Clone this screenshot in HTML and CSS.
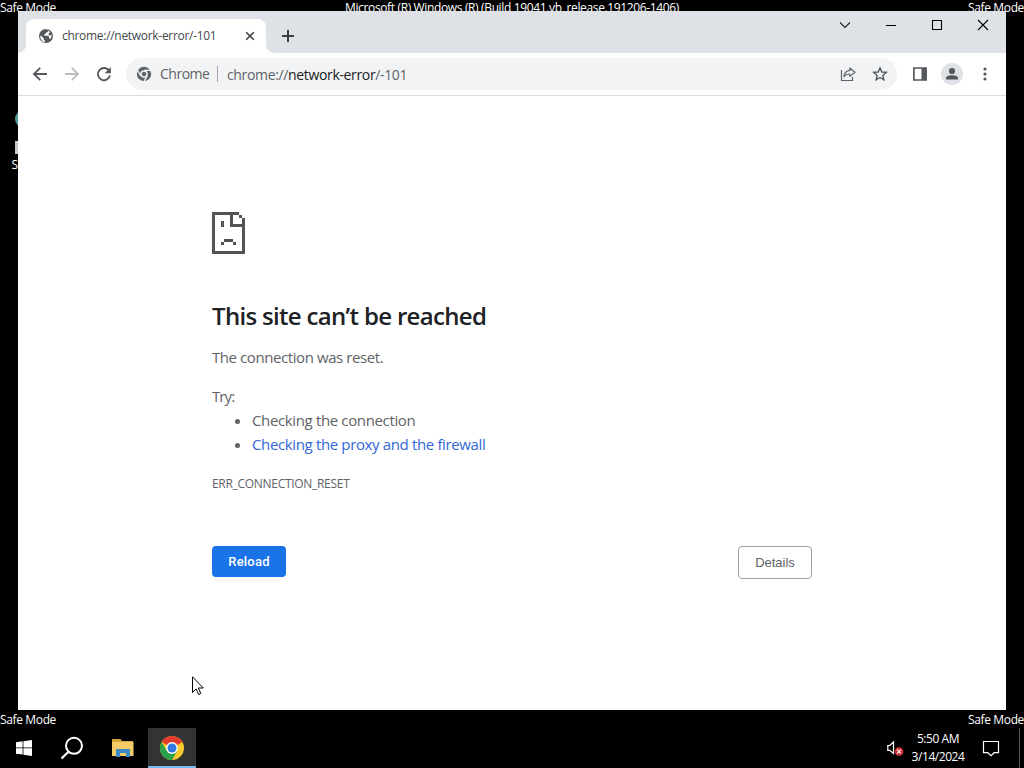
FILE: index.html
```html
<!DOCTYPE html>
<html lang="en">
  <head>
    <meta charset="UTF-8" />
    <meta name="viewport" content="width=device-width, initial-scale=1.0" />
    <title>chrome://network-error/-101</title>
    <link rel="stylesheet" href="styles.css">
  </head>
  <body>
    <div class="desktop">
      <div class="safe-row top">
        <span>Safe Mode</span>
        <span class="build">Microsoft (R) Windows (R) (Build 19041.vb_release.191206-1406)</span>
        <span>Safe Mode</span>
      </div>
      <div class="shortcut">
        <i class="disc"></i>
        <i class="bar"></i>
        <span>S</span>
      </div>
      <div class="safe-row bottom">
        <span>Safe Mode</span>
        <span>Safe Mode</span>
      </div>
    </div>

    <div class="window">
      <div class="tabstrip">
        <div class="tab">
          <svg class="globe" width="16" height="16" viewBox="0 0 16 16">
            <circle cx="8" cy="8" r="7" fill="#54585c" />
            <path d="M2.4 7.2l3.2 3.1v1.2l1.3 1.3v1.5A6.2 6.2 0 0 1 2.4 7.2zM7.2 1.8h3.2v1.4L9.2 4.5H7.8v1.6H6.4v1.6h3.8l1 1.1v1.9h1.2A5.7 5.7 0 0 0 13.7 8c0-.5-.1-1-.2-1.4l-1.4 1.1-1.9-1.5 1.9-2.3A6 6 0 0 0 7.2 1.8z" fill="#fff" />
          </svg>
          <span class="tab-title">chrome://network-error/-101</span>
          <svg class="tab-close" width="10" height="10" viewBox="0 0 10 10">
            <path d="M1.2 1.2l7.6 7.6M8.8 1.2L1.2 8.8" stroke="#3c4043" stroke-width="1.6" />
          </svg>
        </div>
        <svg class="new-tab" width="14" height="14" viewBox="0 0 14 14">
          <path d="M7 1v12M1 7h12" stroke="#3c4043" stroke-width="2" />
        </svg>
        <div class="controls">
          <svg width="12" height="12" viewBox="0 0 12 12"><path d="M1 3.5l5 5 5-5" fill="none" stroke="#222" stroke-width="1.1" /></svg>
          <svg width="12" height="12" viewBox="0 0 12 12"><path d="M1 6.5h10" stroke="#000" /></svg>
          <svg width="12" height="12" viewBox="0 0 12 12"><path d="M1.5 1.5h9v9h-9z" fill="none" stroke="#000" stroke-width="1.1" /></svg>
          <svg width="12" height="12" viewBox="0 0 12 12"><path d="M1 1l10 10M11 1L1 11" stroke="#000" stroke-width="1.1" /></svg>
        </div>
      </div>

      <div class="toolbar">
        <svg class="nav" width="16" height="16" viewBox="0 0 16 16"><path d="M15 8H2.5M8.2 1.8L2 8l6.2 6.2" fill="none" stroke="#54585c" stroke-width="1.9" /></svg>
        <svg class="nav" width="16" height="16" viewBox="0 0 16 16"><path d="M1 8h12.5M7.8 1.8L14 8l-6.2 6.2" fill="none" stroke="#bbbdbf" stroke-width="1.8" /></svg>
        <svg class="nav" width="16" height="16" viewBox="0 0 16 16">
          <path d="M13.3 5A6.1 6.1 0 1 0 14 9.4" fill="none" stroke="#54585c" stroke-width="1.9" />
          <path d="M14.9 1v6.2H8.7z" fill="#54585c" />
        </svg>
        <div class="omnibox">
          <svg width="16" height="16" viewBox="0 0 16 16">
            <circle cx="8" cy="8" r="7.2" fill="#5f6368" />
            <circle cx="8" cy="8" r="3" fill="#5f6368" stroke="#f1f3f4" stroke-width="1.5" />
            <path d="M8 4.3h7M4.8 9.9L1.4 4M11.2 9.9L7.8 15.6" stroke="#f1f3f4" stroke-width="1.3" />
          </svg>
          <span class="chip">Chrome</span>
          <span class="url">chrome://<b>network-error</b>/-101</span>
          <svg class="share" width="16" height="16" viewBox="0 0 16 16">
            <path d="M1.5 4v10.5h11V11" fill="none" stroke="#5f6368" stroke-width="1.2" />
            <path d="M9.8 2l5.2 4.2-5.2 4.2V8C7.2 7.9 5.3 8.8 4 10.7 4.3 7.3 6.3 4.9 9.8 4.4z" fill="none" stroke="#5f6368" stroke-width="1.2" stroke-linejoin="round" />
          </svg>
          <svg width="16" height="16" viewBox="0 0 16 16">
            <path d="M8 1.9l1.8 4.1 4.5.4-3.4 3 1 4.4L8 11.5l-3.9 2.3 1-4.4-3.4-3 4.5-.4z" fill="none" stroke="#54585c" stroke-width="1.4" />
          </svg>
        </div>
        <svg class="panel" width="16" height="16" viewBox="0 0 16 16">
          <path d="M1.9 2h12.2v12H1.9z" fill="none" stroke="#54585c" stroke-width="1.7" />
          <path d="M9.5 2H14v12H9.5z" fill="#54585c" />
        </svg>
        <svg class="avatar" width="22" height="22" viewBox="0 0 22 22">
          <circle cx="11" cy="11" r="11" fill="#dee1e6" />
          <circle cx="11" cy="8" r="3.1" fill="#54585c" />
          <path d="M5 16.5v-1.3c0-2.2 3-3 6-3s6 .8 6 3v1.3z" fill="#54585c" />
        </svg>
        <svg class="dots" width="4" height="14" viewBox="0 0 4 14" fill="#54585c">
          <circle cx="2" cy="2" r="1.6" /><circle cx="2" cy="7" r="1.6" /><circle cx="2" cy="12" r="1.6" />
        </svg>
      </div>

      <div class="page">
        <svg class="sad" width="33" height="42" viewBox="0 0 11 14" shape-rendering="crispEdges">
          <path d="M0 0h9v1H7v3h3V2h1v12H0zM1 1v12h9V5H6V1zM9 1h1v1H9zM3 3h1v2H3zM4 9h3v1H4zM3 10h1v1H3zM7 10h1v1H7z" fill="#535353" fill-rule="evenodd" />
        </svg>
        <h1>This site can’t be reached</h1>
        <p class="reason">The connection was reset.</p>
        <p class="try">Try:</p>
        <ul>
          <li class="check">Checking the connection</li>
          <li class="proxy"><a href="#">Checking the proxy and the firewall</a></li>
        </ul>
        <p class="code">ERR_CONNECTION_RESET</p>
        <div class="buttons">
          <button class="reload">Reload</button>
          <button class="details">Details</button>
        </div>
      </div>
    </div>

    <div class="taskbar">
      <div class="task">
        <svg width="16" height="16" viewBox="0 0 16 16" fill="#fff"><path d="M0 2.2l6.6-.9v6.2H0zM7.4 1.2L16 0v7.5H7.4zM0 8.3h6.6v6.3L0 13.7zM7.4 8.3H16V16l-8.6-1.2z" /></svg>
      </div>
      <div class="task">
        <svg width="24" height="24" viewBox="0 0 24 24" fill="none" stroke="#fff" stroke-width="2"><circle cx="14" cy="9.8" r="8" /><path d="M8.5 15.7L1.5 22.5" stroke-width="2.3" /></svg>
      </div>
      <div class="task folder">
        <svg width="22" height="20" viewBox="0 0 22 20">
          <path d="M0 1h8.5l1.5 2h11v15H0z" fill="#d9a53a" />
          <path d="M0 4h21.5v14H0z" fill="#f4cd68" />
          <path d="M4 11h14v8h-4v-4H8v4H4z" fill="#3f8ac4" />
        </svg>
      </div>
      <div class="task active">
        <svg width="24" height="24" viewBox="0 0 24 24">
          <circle cx="12" cy="12" r="12" fill="#f9c92e" />
          <path d="M12 12L1.6 6A12 12 0 0 1 22.4 6z" fill="#e23b2e" />
          <path d="M1.6 6A12 12 0 0 0 12 24l5.2-9L12 12 6.8 15z" fill="#2ba14b" />
          <circle cx="12" cy="12" r="5.9" fill="#fff" />
          <circle cx="12" cy="12" r="4.5" fill="#2f79e0" />
        </svg>
      </div>
      <div class="tray">
        <svg class="volume" width="17" height="17" viewBox="0 0 17 17">
          <path d="M.8 5.5h2L6.5 2v11.500L2.8 10.3h-2z" fill="none" stroke="#fff" stroke-width="1.2" />
          <circle cx="12" cy="11.5" r="4.3" fill="#d9363e" />
          <path d="M10.2 9.7l3.6 3.6M13.8 9.7l-3.6 3.6" stroke="#fff" stroke-width="1.1" />
        </svg>
        <div class="clock">
          <span class="time">5:50 AM</span>
          <span class="date">3/14/2024</span>
        </div>
        <svg class="notes" width="18" height="17" viewBox="0 0 18 17"><path d="M1.5 1.5h15v11.2h-4.3L9 15.7l-3.2-3H1.5z" fill="none" stroke="#fff" stroke-width="1.2" /></svg>
        <i class="peek"></i>
      </div>
    </div>

    <svg class="cursor" width="13" height="20" viewBox="0 0 13 20"><path d="M.5.8v15.6l3.6-3.5 2.5 5.6 2.2-1-2.5-5.5h5z" fill="#fff" stroke="#000" /></svg>
  </body>
</html>
```
FILE: styles.css
```css
* {
  box-sizing: border-box;
}
body {
  margin: 0;
  width: 1024px;
  height: 768px;
  overflow: hidden;
  display: flex;
  flex-direction: column;
  background: #000;
  color: #fff;
  font-family: "Open Sans", "Noto Sans", sans-serif;
}
svg {
  display: block;
  flex: none;
}
.desktop {
  height: 728px;
  display: flex;
  flex-direction: column;
}
.safe-row {
  display: flex;
  justify-content: space-between;
  font-size: 12px;
  line-height: 16px;
  height: 16px;
  letter-spacing: -0.36px;
  white-space: nowrap;
}
.shortcut {
  width: 18px;
  margin-top: 94px;
  margin-bottom: auto;
  display: flex;
  flex-direction: column;
  align-items: flex-end;
  overflow: hidden;
  font-size: 12px;
  line-height: 18px;
}
.disc {
  width: 18px;
  height: 18px;
  border-radius: 50%;
  background: #4d9a98;
  margin-right: -15px;
}
.bar {
  width: 3px;
  height: 13px;
  background: #c9c9c9;
  margin: 13px 0 2px;
}
.window {
  position: absolute;
  left: 18px;
  top: 11px;
  width: 988px;
  height: 699px;
  background: #fff;
  color: #5f6368;
}
.tabstrip {
  height: 42px;
  padding: 8px 17px 0 8px;
  background: #dee1e6;
  display: flex;
}
.tab {
  position: relative;
  width: 240px;
  height: 34px;
  padding: 0 11px 0 12px;
  background: #fff;
  border-radius: 8px 8px 0 0;
  display: flex;
  align-items: center;
}
/* curved feet of the active tab */
.tab::before,
.tab::after {
  content: "";
  position: absolute;
  bottom: 0;
  width: 8px;
  height: 8px;
}
.tab::before {
  left: -8px;
  background: radial-gradient(circle at 0 0, #dee1e6 7.5px, #fff 8px);
}
.tab::after {
  right: -8px;
  background: radial-gradient(circle at 100% 0, #dee1e6 7.5px, #fff 8px);
}
.tab-title {
  margin-left: 8px;
  flex: 1;
  font-size: 12px;
  line-height: 16px;
  margin-bottom: 1px;
  letter-spacing: -0.3px;
  color: #45494d;
  white-space: nowrap;
}
.new-tab {
  margin: 10px 0 0 15px;
}
.controls {
  margin-left: auto;
  display: flex;
  gap: 34px;
}
.toolbar {
  height: 43px;
  padding: 0 19px 0 14px;
  border-bottom: 1px solid #dadce0;
  display: flex;
  align-items: center;
}
.nav {
  margin-right: 16px;
}
.omnibox {
  width: 771px;
  height: 32px;
  margin-left: -2px;
  padding: 0 9px 0 10px;
  border-radius: 16px;
  background: #f1f3f4;
  display: flex;
  align-items: center;
  font-size: 14px;
}
.chip {
  width: 58px;
  margin-left: 8px;
  border-right: 1px solid #a5a8ac;
  line-height: 16px;
  letter-spacing: -0.5px;
}
.url {
  margin-left: 9px;
  letter-spacing: -0.35px;
}
.url b {
  font-weight: 400;
  color: #202124;
}
.share {
  margin-left: auto;
  margin-right: 16px;
}
.panel {
  margin-left: 15px;
}
.avatar {
  margin-left: 13px;
}
.dots {
  margin-left: auto;
}
.page {
  width: 600px;
  margin-left: 194px;
  padding-top: 116px;
  font-size: 15px;
  line-height: 24px;
  letter-spacing: -0.36px;
}
h1 {
  margin: 47px 0 0;
  font-size: 24px;
  line-height: 29px;
  font-weight: 550;
  letter-spacing: -0.68px;
  color: #202124;
  white-space: nowrap;
}
p {
  margin: 0;
}
.reason {
  margin-top: 15px;
  letter-spacing: -0.42px;
}
.try {
  margin-top: 15px;
  letter-spacing: -0.9px;
}
ul {
  margin: 0;
  padding-left: 40px;
}
a {
  color: #3367d6;
  text-decoration: none;
}
.code {
  margin-top: 16px;
  font-size: 12px;
  letter-spacing: -0.3px;
}
.buttons {
  margin-top: 50px;
  display: flex;
  justify-content: space-between;
  align-items: flex-start;
}
button {
  width: 74px;
  padding: 0;
  border-radius: 4px;
  font-family: "Liberation Sans", Arial, sans-serif;
  font-size: 13px;
}
.reload {
  height: 31px;
  border: none;
  background: #1a73e8;
  color: #fff;
  font-family: Roboto, sans-serif;
  font-weight: 500;
  letter-spacing: 0.2px;
}
.details {
  height: 33px;
  border: 1px solid #9aa0a6;
  background: #fff;
  color: #5f6368;
}
.taskbar {
  height: 40px;
  display: flex;
}
.task {
  width: 48px;
  display: flex;
  align-items: center;
  justify-content: center;
}
.folder {
  margin-left: 3px;
}
.active {
  margin-left: 1px;
  background: #333;
  border-bottom: 2px solid #76b9ed;
}
.active svg {
  margin-top: 2px;
}
.tray {
  margin-left: auto;
  display: flex;
  align-items: center;
}
.clock {
  width: 60px;
  margin-left: 4px;
  margin-right: 1px;
  display: flex;
  flex-direction: column;
  align-items: center;
  font-size: 12px;
  line-height: 18px;
  letter-spacing: -0.45px;
}
.notes {
  margin-left: 13px;
}
.peek {
  width: 5px;
  height: 40px;
  margin-left: 19px;
  border-left: 1px solid #555;
}
.cursor {
  position: absolute;
  left: 192px;
  top: 676px;
}
```
